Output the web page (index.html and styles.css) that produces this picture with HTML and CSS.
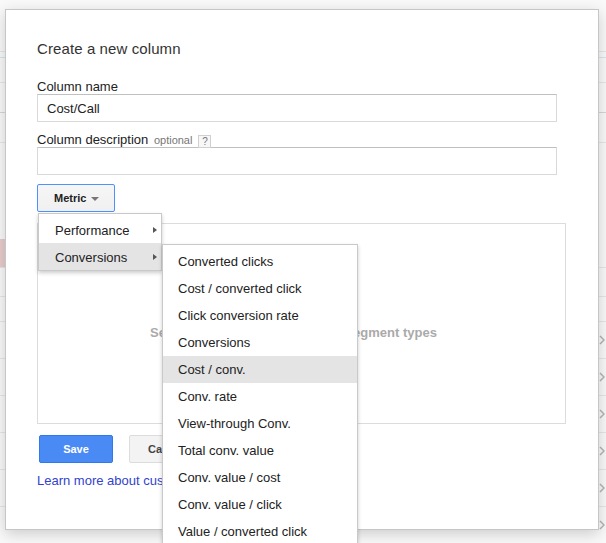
FILE: index.html
```html
<!DOCTYPE html>
<html>
<head>
<meta charset="utf-8">
<link rel="stylesheet" href="styles.css">
</head>
<body>
<div class="page">
  <div class="pg-row h52"></div>
  <div class="pg-row h6 blue"></div>
  <div class="pg-row h25"></div>
  <div class="pg-row h30 dark"></div>
  <div class="pg-row h30"></div>
  <div class="pg-row h96 nol"></div>
  <div class="pg-row h29 pink"><span class="pinkcell"></span></div>
  <div class="pg-row h29"></div>
  <div class="pg-row h25"></div>
  <div class="pg-row h37 chev"><svg width="6" height="10" viewBox="0 0 6 10"><path d="M1 1l4 4-4 4" fill="none" stroke="#b4b4b4" stroke-width="1.5"/></svg></div>
  <div class="pg-row h37 chev"><svg width="6" height="10" viewBox="0 0 6 10"><path d="M1 1l4 4-4 4" fill="none" stroke="#b4b4b4" stroke-width="1.5"/></svg></div>
  <div class="pg-row h37 chev"><svg width="6" height="10" viewBox="0 0 6 10"><path d="M1 1l4 4-4 4" fill="none" stroke="#b4b4b4" stroke-width="1.5"/></svg></div>
  <div class="pg-row h37 chev"><svg width="6" height="10" viewBox="0 0 6 10"><path d="M1 1l4 4-4 4" fill="none" stroke="#b4b4b4" stroke-width="1.5"/></svg></div>
  <div class="pg-row h37 chev"><svg width="6" height="10" viewBox="0 0 6 10"><path d="M1 1l4 4-4 4" fill="none" stroke="#b4b4b4" stroke-width="1.5"/></svg></div>
  <div class="pg-row h37 chev"><svg width="6" height="10" viewBox="0 0 6 10"><path d="M1 1l4 4-4 4" fill="none" stroke="#b4b4b4" stroke-width="1.5"/></svg></div>
</div>

<div class="dialog">
  <div class="title">Create a new column</div>
  <div class="label">Column name</div>
  <div class="input">Cost/Call</div>
  <div class="label label2">Column description <span class="opt">optional</span><span class="help">?</span></div>
  <div class="input"></div>

  <div class="metric-wrap">
    <div class="btn-metric">Metric<span class="caret"></span></div>
    <div class="menu">
      <div class="item">Performance<span class="arrow"></span></div>
      <div class="item active">Conversions<span class="arrow"></span>
        <div class="submenu">
          <div class="sitem">Converted clicks</div>
          <div class="sitem">Cost / converted click</div>
          <div class="sitem">Click conversion rate</div>
          <div class="sitem">Conversions</div>
          <div class="sitem active">Cost / conv.</div>
          <div class="sitem">Conv. rate</div>
          <div class="sitem">View-through Conv.</div>
          <div class="sitem">Total conv. value</div>
          <div class="sitem">Conv. value / cost</div>
          <div class="sitem">Conv. value / click</div>
          <div class="sitem">Value / converted click</div>
        </div>
      </div>
    </div>
  </div>

  <div class="box"><span class="hint">Select a metric, or one of many segment types</span></div>

  <div class="actions">
    <div class="btn save">Save</div>
    <div class="btn cancel">Cancel</div>
  </div>
  <a class="learn">Learn more about custom columns</a>
</div>
</body>
</html>
```

FILE: styles.css
```css
* { box-sizing: border-box; }
html, body { margin: 0; padding: 0; }
body {
  width: 606px;
  height: 543px;
  overflow: hidden;
  position: relative;
  background: #f9f9f9;
  font-family: Arial, "Liberation Sans", sans-serif;
  color: #222;
}

/* background page */
.page { display: flex; flex-direction: column; }
.pg-row { border-bottom: 1px solid #e6e6e6; display: flex; align-items: center; justify-content: flex-end; }
.pg-row.nol { border-bottom-color: transparent; }
.pg-row.blue { border-bottom-color: #d3e6ef; }
.pg-row.dark { border-bottom-color: #d6d6d6; }
.h52 { height: 52px; }
.h6 { height: 6px; }
.h25 { height: 25px; }
.h29 { height: 29px; }
.h30 { height: 30px; }
.h37 { height: 37px; }
.h96 { height: 96px; }
.pink { justify-content: flex-start; }
.pinkcell { width: 20px; height: 100%; background: #e8cccc; }
.chev { padding-right: 1px; }

/* dialog */
.dialog {
  position: absolute;
  left: 5px;
  top: 9px;
  width: 594px;
  height: 521px;
  background: #fff;
  border: 1px solid #c6c6c6;
  box-shadow: 0 4px 14px rgba(0, 0, 0, 0.18);
  padding: 29px 31px 28px;
}
.title { font-size: 15px; line-height: 20px; color: #333; margin-bottom: 19px; letter-spacing: 0.1px; }
.label { font-size: 13px; line-height: 18px; height: 16px; color: #222; }
.label2 { margin-top: 9px; }
.opt { font-size: 11px; color: #777; margin-left: 2px; }
.help {
  display: inline-block;
  width: 13px;
  height: 13px;
  border: 1px solid #d0d0d0;
  background: #f7f7f7;
  font-size: 10px;
  line-height: 11px;
  text-align: center;
  color: #777;
  margin-left: 6px;
  vertical-align: -1px;
}
.input {
  width: 520px;
  height: 28px;
  border: 1px solid #d9d9d9;
  border-top-color: #c0c0c0;
  font-size: 13px;
  line-height: 27px;
  padding-left: 9px;
  color: #222;
}

.metric-wrap { position: relative; margin-top: 9px; width: 78px; }
.btn-metric {
  width: 78px;
  height: 28px;
  border: 1px solid #4d90fe;
  border-radius: 2px;
  background: linear-gradient(#f6f6f6, #f0f0f0);
  font-size: 11px;
  font-weight: bold;
  line-height: 26px;
  padding-left: 16px;
  color: #222;
}
.caret {
  display: inline-block;
  width: 0; height: 0;
  border-top: 4px solid #777;
  border-left: 4px solid transparent;
  border-right: 4px solid transparent;
  margin-left: 5px;
  vertical-align: 1px;
}
.menu {
  position: absolute;
  top: 29px;
  left: 1px;
  width: 124px;
  background: #fff;
  border: 1px solid #c9c9c9;
  box-shadow: 0 2px 4px rgba(0, 0, 0, 0.2);
  padding-top: 2px;
  z-index: 5;
}
.item {
  position: relative;
  height: 27px;
  line-height: 29px;
  font-size: 13px;
  padding-left: 16px;
  color: #222;
}
.item.active { background: #e4e4e4; }
.arrow {
  position: absolute;
  right: 4px;
  top: 11px;
  width: 0; height: 0;
  border-left: 4px solid #555;
  border-top: 3.5px solid transparent;
  border-bottom: 3.5px solid transparent;
}
.submenu {
  position: absolute;
  left: 123px;
  top: 1px;
  width: 196px;
  background: #fff;
  border: 1px solid #c9c9c9;
  box-shadow: 0 2px 4px rgba(0, 0, 0, 0.2);
  padding-top: 3px;
  z-index: 6;
  line-height: 27px;
}
.sitem {
  height: 27px;
  line-height: 27px;
  font-size: 13px;
  padding-left: 15px;
  color: #222;
}
.sitem.active { background: #e4e4e4; }

.box {
  margin-top: 11px;
  width: 529px;
  height: 201px;
  border: 1px solid #dcdcdc;
  text-align: center;
  padding-top: 99px;
  padding-right: 16px;
}
.hint { font-size: 13px; font-weight: bold; color: #aaa; line-height: 16px; }

.actions { display: flex; gap: 16px; margin-top: 11px; padding-left: 2px; }
.btn {
  height: 28px;
  width: 74px;
  border-radius: 2px;
  font-size: 11px;
  font-weight: bold;
  line-height: 26px;
  text-align: center;
}
.save { background: #4a8af4; border: 1px solid #3079ed; color: #fff; }
.cancel { background: #f3f3f3; border: 1px solid #dcdcdc; color: #444; }
.learn {
  display: block;
  margin-top: 10px;
  font-size: 13px;
  line-height: 16px;
  color: #3143cc;
  text-decoration: none;
}
```
